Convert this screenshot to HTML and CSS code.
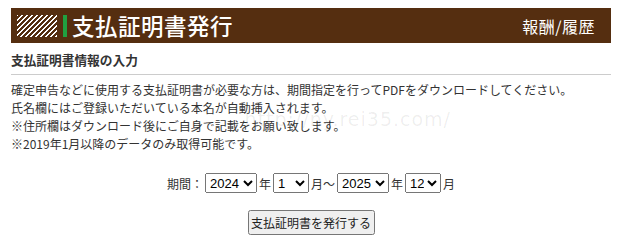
FILE: index.html
```html
<!DOCTYPE html>
<html lang="ja">
<head>
<meta charset="utf-8">
<link rel="stylesheet" href="styles.css">
</head>
<body>
<div class="page">
  <div class="header">
    <div class="hatch"></div>
    <div class="accent"></div>
    <h1 class="title">支払証明書発行</h1>
    <div class="crumb">報酬/履歴</div>
  </div>
  <h2 class="section">支払証明書情報の入力</h2>
  <div class="notes">
    <p>確定申告などに使用する支払証明書が必要な方は、期間指定を行ってPDFをダウンロードしてください。</p>
    <p>氏名欄にはご登録いただいている本名が自動挿入されます。</p>
    <p>※住所欄はダウンロード後にご自身で記載をお願い致します。</p>
    <p>※2019年1月以降のデータのみ取得可能です。</p>
    <span class="watermark">http://ny.rei35.com/</span>
  </div>
  <form class="period">
    <div class="row">
      <span>期間：</span>
      <select class="sel-y"><option>2024</option></select><span>年</span>
      <select class="sel-m"><option>1</option></select><span>月～</span>
      <select class="sel-y"><option>2025</option></select><span>年</span>
      <select class="sel-m"><option>12</option></select><span>月</span>
    </div>
    <div class="row btnrow">
      <button type="button" class="btn">支払証明書を発行する</button>
    </div>
  </form>
</div>
</body>
</html>
```
FILE: styles.css
```css
html, body {
  margin: 0;
  padding: 0;
  background: #fff;
}
body {
  font-family: "Noto Sans CJK JP", "Noto Sans", sans-serif;
  color: #333;
}
.page {
  width: 600px;
  margin: 8px 0 0 11px;
}
.header {
  display: flex;
  align-items: center;
  height: 35px;
  background: #552e10;
  padding: 0 16px 0 6px;
}
.hatch {
  width: 40px;
  height: 22px;
  background: repeating-linear-gradient(135deg, #fff 0 1.3px, #552e10 1.3px 3.5px);
}
.accent {
  width: 4px;
  height: 22px;
  background: #20a040;
  margin-left: 6px;
}
.title {
  margin: 0 0 0 5px;
  font-size: 22.5px;
  font-weight: 500;
  color: #fff;
  letter-spacing: 0.5px;
  line-height: 35px;
  flex: 1;
}
.crumb {
  color: #fff;
  font-size: 16px;
  font-weight: 400;
  letter-spacing: 0.5px;
}
.section {
  margin: 7px 0 0;
  font-size: 12.7px;
  font-weight: 700;
  color: #333;
  line-height: 20px;
  padding-bottom: 4px;
  border-bottom: 1px solid #ccc;
}
.notes {
  position: relative;
  margin-top: 6px;
  font-size: 12px;
  line-height: 18px;
  color: #333;
}
.notes p {
  margin: 0;
}
.watermark {
  position: absolute;
  right: 160px;
  top: 29px;
  font-family: "DejaVu Sans", sans-serif;
  font-size: 19px;
  color: rgba(0, 0, 0, 0.07);
  letter-spacing: 1px;
  pointer-events: none;
}
.period {
  margin-top: 20px;
  font-size: 12px;
}
.row {
  display: flex;
  justify-content: center;
  align-items: center;
}
.row select {
  font-family: "Liberation Sans", Arial, sans-serif;
  font-size: 13px;
  height: 20px;
  margin: 0 2px 0 0;
}
.row span + select {
  margin-left: 2px;
}
.sel-y {
  width: 52px;
}
.sel-m {
  width: 36px;
}
.btnrow {
  margin-top: 17px;
}
.btn {
  font-family: "Noto Sans CJK JP", sans-serif;
  font-size: 12px;
  padding: 0;
  height: 25px;
  width: 127px;
  white-space: nowrap;
  color: #222;
}
```
